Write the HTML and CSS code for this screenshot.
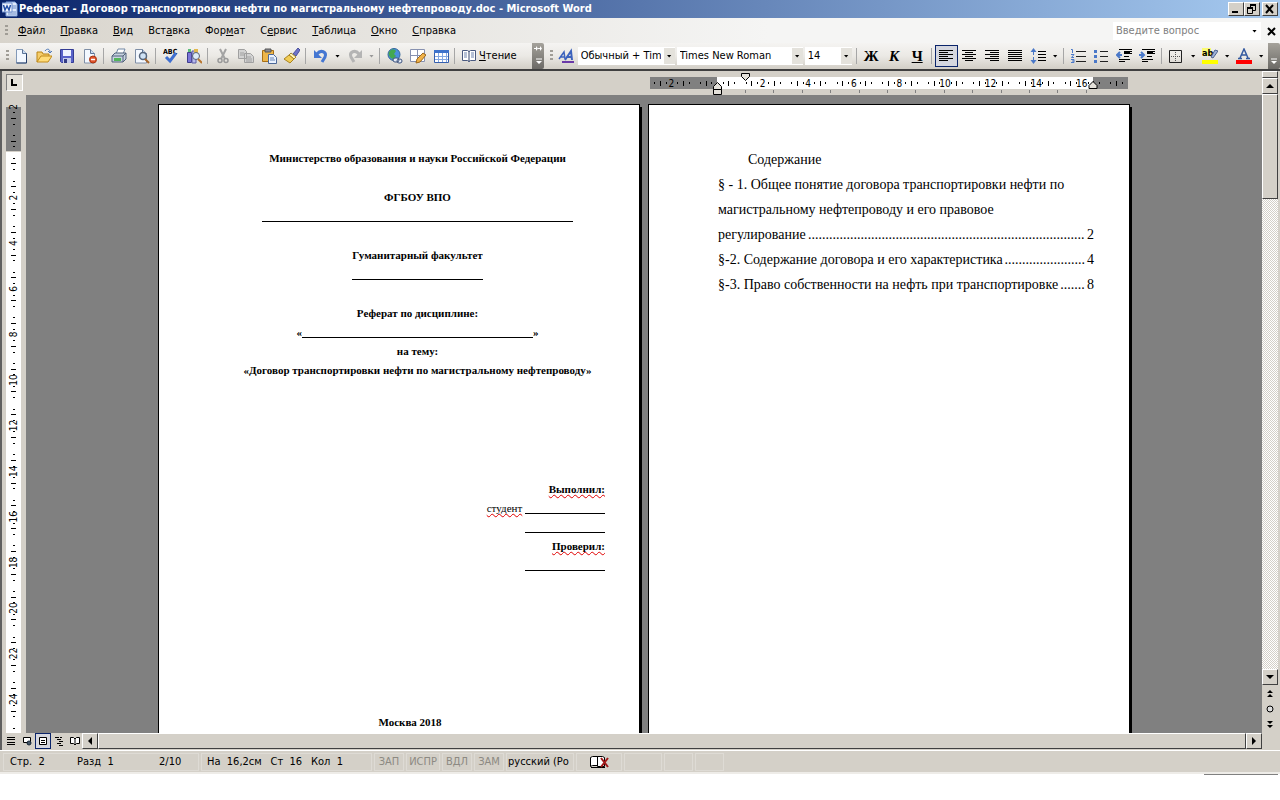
FILE: index.html
```html
<!DOCTYPE html>
<html lang="ru">
<head>
<meta charset="utf-8">
<title>Реферат - Договор транспортировки нефти по магистральному нефтепроводу.doc - Microsoft Word</title>
<link rel="stylesheet" href="styles.css">
</head>
<body>
<div class="app">
  <header class="titlebar">
    <svg class="icon" viewBox="0 0 16 16"><path d="M4 1h9l2 2v12H4z" fill="#dfe9fa" stroke="#7d9fd8"/><path d="M10 5h4M10 7h4M6 11h8M6 13h8" stroke="#6a8cc8"/><path d="M0 2h10v9H0z" fill="#f4f8ff" stroke="#6f8fcc"/><path d="M1.500 4l1.500 5 2-4 2 4 1.500-5" fill="none" stroke="#2450a8" stroke-width="1.500"/></svg>
    <h1>Реферат - Договор транспортировки нефти по магистральному нефтепроводу.doc - Microsoft Word</h1>
    <div class="winbtns">
      <button aria-label="Свернуть"><svg viewBox="0 0 12 10"><path d="M2 8h6" stroke="#000" stroke-width="2"/></svg></button>
      <button aria-label="Восстановить"><svg viewBox="0 0 12 10"><path d="M4 1h6M1 4h6" stroke="#000" stroke-width="2"/><path d="M4.500 2v1M9.500 2v4.500H7M1.500 5v4.500h5V5" fill="none" stroke="#000"/></svg></button>
      <button class="close" aria-label="Закрыть"><svg viewBox="0 0 12 10"><path d="M2 1l7 8M9 1l-7 8" stroke="#000" stroke-width="2"/></svg></button>
    </div>
  </header>

  <nav class="menubar">
    <span class="grip"></span>
    <button><u>Ф</u>айл</button><button><u>П</u>равка</button><button><u>В</u>ид</button><button>Вст<u>а</u>вка</button><button>Фор<u>м</u>ат</button><button>С<u>е</u>рвис</button><button><u>Т</u>аблица</button><button><u>О</u>кно</button><button><u>С</u>правка</button>
    <div class="ask"><input type="text" placeholder="Введите вопрос" aria-label="Введите вопрос"><span class="caret"></span></div>
    <button class="doc-close" aria-label="Закрыть окно"><svg viewBox="0 0 9 9"><path d="M1 1l7 7M8 1L1 8" stroke="#000" stroke-width="2"/></svg></button>
  </nav>

  <div class="toolbars">
    <div class="toolbar standard">
      <span class="grip"></span>
      <button class="tb" aria-label="Создать"><svg viewBox="0 0 16 16"><path d="M3.500 1.500h6l4 4v9.500h-10z" fill="#f3f8ff" stroke="#8299b8"/><path d="M13.500 5v10h-10" fill="none" stroke="#27406b"/><path d="M9.500 1.500v4h4" fill="#cbdcf2" stroke="#5c7496"/></svg></button>
      <button class="tb" aria-label="Открыть"><svg viewBox="0 0 16 16"><path d="M1 14V4h5l1 2h6v3" fill="#f5cd6a" stroke="#b98315"/><path d="M1 14l4-6h11l-4 6z" fill="#ffdc78" stroke="#c08a1a"/><path d="M9 3c2-3 5-2 5 1M12 3l2 2 2-2" fill="none" stroke="#4d78b8"/></svg></button>
      <button class="tb" aria-label="Сохранить"><svg viewBox="0 0 16 16"><path d="M1.500 1.500h13v13h-12l-1-1z" fill="#5862c8" stroke="#343c94"/><path d="M4 2h8v6H4z" fill="#eef2ff"/><path d="M4 10h8v5H4z" fill="#c6ccea"/><path d="M5 11h3v4H5z" fill="#343c84"/></svg></button>
      <button class="tb" aria-label="Разрешения"><svg viewBox="0 0 16 16"><path d="M2.500 1.500h6l4 4v9.500h-10z" fill="#f3f8ff" stroke="#7e8ea6"/><path d="M8.500 1.500v4h4" fill="#cbdcf2" stroke="#5c7496"/><circle cx="11" cy="11.500" r="3.500" fill="#e0532c" stroke="#a8320f"/><path d="M9 11.500h4" stroke="#fff" stroke-width="1.500"/></svg></button>
      <span class="sep"></span>
      <button class="tb" aria-label="Печать"><svg viewBox="0 0 16 16"><path d="M5 6l2-5h7l-2 5" fill="#fff" stroke="#7087a5"/><path d="M1 8l3-3h11v6l-3 3H1z" fill="#c7d2df" stroke="#50617a"/><path d="M1 8h11v6M12 8l3-3" fill="none" stroke="#50617a"/><path d="M3 10h7v3H3z" fill="#53b65a"/></svg></button>
      <button class="tb" aria-label="Предварительный просмотр"><svg viewBox="0 0 16 16"><path d="M1.500 1.500h7l4 4v9.500h-11z" fill="#f3f8ff" stroke="#7e8ea6"/><path d="M8.500 1.500v4h4" fill="#cbdcf2" stroke="#5c7496"/><circle cx="9" cy="8" r="3.500" fill="#cfe2f5" stroke="#55657c" stroke-width="1.500"/><path d="M11 11l4 4" stroke="#a5652c" stroke-width="2"/></svg></button>
      <span class="sep"></span>
      <button class="tb" aria-label="Правописание"><svg viewBox="0 0 16 16"><text x="0" y="6" class="abc">ABC</text><path d="M3 9l4 4 6-8" fill="none" stroke="#3f6fd0" stroke-width="3"/></svg></button>
      <button class="tb" aria-label="Справочные материалы"><svg viewBox="0 0 16 16"><path d="M1.500 4.500h4v10h-4z" fill="#7b76d8" stroke="#3f3d8c"/><path d="M2 1h3v3H2z" fill="#5cbf7b"/><path d="M6 3h4v12H6z" fill="#b7b9ea" stroke="#5c5ca6"/><path d="M8 1h4v4H8z" fill="#e2b84c"/><circle cx="10" cy="8" r="3.500" fill="#dcebf8" stroke="#56617a"/><path d="M12 11l4 4" stroke="#b8762f" stroke-width="2"/></svg></button>
      <span class="sep"></span>
      <button class="tb" aria-label="Вырезать"><svg viewBox="0 0 16 16"><path d="M5 1l5 10M11 1L6 11" stroke="#a3a3a3" stroke-width="2"/><circle cx="5" cy="12.500" r="2" fill="none" stroke="#999" stroke-width="1.500"/><circle cx="11" cy="12.500" r="2" fill="none" stroke="#999" stroke-width="1.500"/></svg></button>
      <button class="tb" aria-label="Копировать"><svg viewBox="0 0 16 16"><path d="M.5 1.500h6l2 2v7h-8zM6.500 5.500h6l3 3v6h-9z" fill="#d3d3d3" stroke="#a0a0a0"/><path d="M2 5h4M2 7h4M8 9h5M8 11h6M8 13h6" stroke="#a0a0a0"/></svg></button>
      <button class="tb" aria-label="Вставить"><svg viewBox="0 0 16 16"><path d="M1.500 2.500h11v11h-11z" fill="#eeb64a" stroke="#a86f14"/><path d="M4 1h6v3H4z" fill="#8c8c94" stroke="#555"/><path d="M7.500 6.500h5l3 3v6h-8z" fill="#eaf2ff" stroke="#4c6897"/><path d="M9 10h4M9 12h5" stroke="#6583b4"/></svg></button>
      <button class="tb" aria-label="Формат по образцу"><svg viewBox="0 0 16 16"><path d="M9 6l5-6 2 2-4 6z" fill="#6e74c9" stroke="#4a4f9c"/><path d="M7 5l5 4-2 2-5-4z" fill="#fff4b5" stroke="#a08532"/><path d="M5 7l5 4-4 4-6-4z" fill="#f1cc55" stroke="#a98320"/></svg></button>
      <span class="sep"></span>
      <button class="tb" aria-label="Отменить"><svg viewBox="0 0 16 16"><path d="M4 6c4-5 10-2 8 3l-3 5" fill="none" stroke="#4577d2" stroke-width="3"/><path d="M1 2v8h8z" fill="#4577d2"/></svg></button>
      <button class="drop" aria-label="Список отмены"><span class="caret"></span></button>
      <button class="tb" aria-label="Вернуть"><svg viewBox="0 0 16 16"><path d="M12 6C8 1 2 4 4 9l3 5" fill="none" stroke="#b4b4b4" stroke-width="3"/><path d="M15 2v8H7z" fill="#b4b4b4"/></svg></button>
      <button class="drop" aria-label="Список возврата"><span class="caret dim"></span></button>
      <span class="sep"></span>
      <button class="tb" aria-label="Гиперссылка"><svg viewBox="0 0 16 16"><circle cx="7" cy="6.500" r="6" fill="#4b8fdc" stroke="#33669a"/><path d="M2 4c3-4 5-3 7-1l-2 3 2 2-3 3C3 10 1 7 2 4z" fill="#44a851"/><path d="M6 12a2 2 0 012-2h2a2 2 0 010 4H8a2 2 0 01-2-2zM10 13a2 2 0 012-2h1a2 2 0 010 4h-1a2 2 0 01-2-2z" fill="#e6edf8" stroke="#3c527d"/></svg></button>
      <button class="tb" aria-label="Таблицы и границы"><svg viewBox="0 0 16 16"><path d="M.5 1.500h14v12H.5zM7.500 1v13M0 7.500h15" fill="#fff" stroke="#8791b0"/><path d="M6 15l1-4 6-6 3 2-6 7z" fill="#f0b24a" stroke="#9d681a"/></svg></button>
      <button class="tb" aria-label="Добавить таблицу"><svg viewBox="0 0 16 16"><path d="M1.500 2.500h14v12h-14z" fill="#fff" stroke="#345fae"/><path d="M1 2h15v3H1z" fill="#3d72cb"/><path d="M5.500 5v9M9.500 5v9M13.500 5v9M2 8.500h13M2 11.500h13" stroke="#83a7e2"/></svg></button>
      <span class="sep"></span>
      <button class="reading"><svg viewBox="0 0 16 16"><path d="M1.500 2.500h5l1.500 1 1.500-1h5v10h-5L8 13.500l-1.500-1h-5z" fill="#fff" stroke="#4a5a80"/><path d="M8 3v11" stroke="#34446c"/><path d="M3 5h3M3 7h3M3 9h3M10 5h3M10 7h3M10 9h3" stroke="#6f83ad"/></svg><span><u>Ч</u>тение</span></button>
      <button class="more" aria-label="Параметры панели"><svg viewBox="0 0 12 26"><path d="M2 5.500h2M6 5.500h2M4 16h6" stroke="#fff"/><path d="M4 3l2 2.500L4 8zM8 3l2 2.500L8 8zM4 18h6l-3 3z" fill="#fff"/></svg></button>
    </div>
    <div class="toolbar formatting">
      <span class="grip"></span>
      <button class="tb" aria-label="Стили и форматирование"><svg viewBox="0 0 16 16"><path d="M1 11L6 4l1 7M3 9h4" fill="none" stroke="#3b62bd" stroke-width="1.500"/><path d="M7 12l6-9 1 9M9 9h5" fill="none" stroke="#3b62bd" stroke-width="2"/><path d="M4 14h12" stroke="#6a3aa8" stroke-width="2"/></svg></button>
      <span class="combo style"><select aria-label="Стиль"><option>Обычный + Times New Roman</option></select><span class="arrow"><span class="caret"></span></span></span>
      <span class="combo font"><select aria-label="Шрифт"><option>Times New Roman</option></select><span class="arrow"><span class="caret"></span></span></span>
      <span class="combo size"><select aria-label="Размер"><option>14</option></select><span class="arrow"><span class="caret"></span></span></span>
      <span class="sep"></span>
      <button class="tb letter">Ж</button>
      <button class="tb letter"><i>К</i></button>
      <button class="tb letter"><u>Ч</u></button>
      <span class="sep"></span>
      <button class="tb active" aria-label="По левому краю"><svg viewBox="0 0 16 16"><path d="M1 2.500h14M1 4.500h9M1 6.500h14M1 8.500h9M1 10.500h14M1 12.500h9" stroke="#000"/></svg></button>
      <button class="tb" aria-label="По центру"><svg viewBox="0 0 16 16"><path d="M1 2.500h14M4 4.500h8M1 6.500h14M4 8.500h8M1 10.500h14M4 12.500h8" stroke="#000"/></svg></button>
      <button class="tb" aria-label="По правому краю"><svg viewBox="0 0 16 16"><path d="M1 2.500h14M6 4.500h9M1 6.500h14M6 8.500h9M1 10.500h14M6 12.500h9" stroke="#000"/></svg></button>
      <button class="tb" aria-label="По ширине"><svg viewBox="0 0 16 16"><path d="M1 2.500h14M1 4.500h14M1 6.500h14M1 8.500h14M1 10.500h14M1 12.500h14" stroke="#000"/></svg></button>
      <button class="tb" aria-label="Междустрочный интервал"><svg viewBox="0 0 16 16"><path d="M3.500 2v5M3.500 9v5" stroke="#4a78c8"/><path d="M.5 4l3-4 3 4zM.5 12l3 4 3-4z" fill="#4a78c8"/><path d="M8 3.500h8M8 6.500h8M8 9.500h8M8 12.500h8" stroke="#000"/></svg></button>
      <button class="drop" aria-label="Выбор интервала"><span class="caret"></span></button>
      <span class="sep"></span>
      <button class="tb" aria-label="Нумерация"><svg viewBox="0 0 16 16"><path d="M1 1.500h1.500V5M1 6.500h3L1.500 9.500H4M1 11.500h3v3H1M2 13h2" fill="none" stroke="#4a78c8"/><path d="M6 3.500h10M6 8.500h10M6 13.500h10" stroke="#222"/></svg></button>
      <button class="tb" aria-label="Маркеры"><svg viewBox="0 0 16 16"><path d="M1 2h3v3H1zM1 7h3v3H1zM1 12h3v3H1z" fill="#4a78c8"/><path d="M7 3.500h8M7 8.500h8M7 13.500h8" stroke="#222"/></svg></button>
      <button class="tb" aria-label="Уменьшить отступ"><svg viewBox="0 0 16 16"><path d="M3 1.500h13M8 3.500h8M8 5.500h8M8 8.500h5M3 11.500h11M3 13.500h6" stroke="#000"/><path d="M8 4h6" stroke="#000" stroke-width="2"/><path d="M6 7H2M4 4L1 7l3 3" fill="none" stroke="#4a78c8" stroke-width="2"/></svg></button>
      <button class="tb" aria-label="Увеличить отступ"><svg viewBox="0 0 16 16"><path d="M3 1.500h13M8 3.500h8M8 5.500h8M8 8.500h5M3 11.500h11M3 13.500h6" stroke="#000"/><path d="M8 4h6" stroke="#000" stroke-width="2"/><path d="M0 7h4M2 4l3 3-3 3" fill="none" stroke="#4a78c8" stroke-width="2"/></svg></button>
      <span class="sep"></span>
      <button class="tb" aria-label="Границы"><svg viewBox="0 0 16 16"><path d="M1.500 2.500h12v12h-12z" fill="none" stroke="#222"/><path d="M7.500 4v10M3 8.500h10" stroke="#555" stroke-dasharray="1 1"/></svg></button>
      <button class="drop" aria-label="Выбор границы"><span class="caret"></span></button>
      <button class="tb" aria-label="Выделение цветом"><svg viewBox="0 0 16 16"><path d="M0 0h9v8H0z" fill="#fbfb73"/><text x="0" y="8" class="ab">ab</text><path d="M9 9l4-7 3 1-5 7z" fill="#9fb2d8" stroke="#4d628f"/><path d="M0 12h16v4H0z" fill="#ff0"/></svg></button>
      <button class="drop" aria-label="Цвет выделения"><span class="caret"></span></button>
      <button class="tb" aria-label="Цвет шрифта"><svg viewBox="0 0 16 16"><path d="M4 10L8 1l4 9M5 7h6M2 10.500h4M10 10.500h4" fill="none" stroke="#34599f" stroke-width="1.500"/><path d="M0 12h16v4H0z" fill="#f00"/></svg></button>
      <button class="drop" aria-label="Выбор цвета шрифта"><span class="caret"></span></button>
      <button class="more end" aria-label="Параметры панели форматирования"><svg viewBox="0 0 12 26"><path d="M3 16h6" stroke="#fff"/><path d="M3 18h6l-3 3z" fill="#fff"/></svg></button>
    </div>
  </div>

  <main class="work">
    <div class="left-col">
      <button class="tabstop" aria-label="Табуляция"><svg viewBox="0 0 9 9"><path d="M2 1v6h5" fill="none" stroke="#000" stroke-width="2"/></svg></button>
      <div class="vruler">
        <svg width="15" height="7000" viewBox="0 0 150 70000">
          <rect y="30" width="150" height="440" fill="#808080"/>
          <rect y="480" width="150" height="69520" fill="#fff"/>
          <g shape-rendering="crispEdges" stroke="#000">
            <path d="M75 138V6270" stroke-width="50" stroke-dasharray="10 218"/>
            <path d="M75 81V6270" stroke-width="20" stroke-dasharray="10 104"/>
          </g>
          <g class="marks">
            <text transform="translate(110 30) rotate(-90)">2</text>
            <text transform="translate(110 936) rotate(-90)">2</text>
            <text transform="translate(110 1392) rotate(-90)">4</text>
            <text transform="translate(110 1848) rotate(-90)">6</text>
            <text transform="translate(110 2304) rotate(-90)">8</text>
            <text transform="translate(110 2760) rotate(-90)">10</text>
            <text transform="translate(110 3216) rotate(-90)">12</text>
            <text transform="translate(110 3672) rotate(-90)">14</text>
            <text transform="translate(110 4128) rotate(-90)">16</text>
            <text transform="translate(110 4584) rotate(-90)">18</text>
            <text transform="translate(110 5040) rotate(-90)">20</text>
            <text transform="translate(110 5496) rotate(-90)">22</text>
            <text transform="translate(110 5952) rotate(-90)">24</text>
          </g>
        </svg>
      </div>
    </div>

    <div class="center-col">
      <div class="hruler">
        <span class="sheet-space"></span>
        <span class="sheet-space">
        <svg width="482" height="24" viewBox="0 0 4820 240">
          <rect x="20" y="60" width="4780" height="120" fill="#808080"/>
          <rect x="690" y="60" width="3760" height="120" fill="#fff"/>
          <g shape-rendering="crispEdges" stroke="#000">
            <path d="M120 120H4700" stroke-width="50" stroke-dasharray="10 218"/>
            <path d="M63 120H4750" stroke-width="20" stroke-dasharray="10 104"/>
            <path d="M970 205H4600" stroke-width="30" stroke-dasharray="10 274" stroke="#808080"/>
          </g>
          <g class="marks">
            <text x="234" y="155">2</text><text x="1146" y="155">2</text><text x="1602" y="155">4</text><text x="2058" y="155">6</text><text x="2514" y="155">8</text><text x="2970" y="155">10</text><text x="3426" y="155">12</text><text x="3882" y="155">14</text><text x="4338" y="155">16</text>
          </g>
          <g fill="#e4e1da" stroke="#000" stroke-width="10"><path d="M935 25h80v30l-40 40-40-40z"/><path d="M655 185v-30l40-40 40 40v30zM655 185h80v50h-80z"/><path d="M4410 175v-30l40-40 40 40v30z"/></g>
        </svg>
        </span>
      </div>
      <div class="canvas">
        <article class="page cover">
          <section class="heading"><p>Министерство образования и науки Российской Федерации</p></section>
          <section class="heading"><p>ФГБОУ ВПО</p><p><span class="blank w-full"></span></p></section>
          <section class="heading"><p>Гуманитарный факультет</p><p><span class="blank w-mid"></span></p></section>
          <section class="heading"><p>Реферат по дисциплине:</p><p>«<span class="blank w-topic"></span>»</p><p>на тему:</p><p>«Договор транспортировки нефти по магистральному нефтепроводу»</p></section>
          <section class="sign"><p><b class="typo">Выполнил:</b></p><p><span class="typo">студент</span> <span class="blank w-sign"></span></p><p><span class="blank w-sign"></span></p><p><b class="typo">Проверил:</b></p><p><span class="blank w-sign"></span></p></section>
          <p class="city">Москва 2018</p>
        </article>
        <article class="page toc">
          <h2>Содержание</h2>
          <p>§ - 1. Общее понятие договора транспортировки нефти по</p>
          <p>магистральному нефтепроводу и его правовое</p>
          <p class="entry"><span>регулирование</span><span>...............................................................................</span><span>2</span></p>
          <p class="entry"><span>§-2. Содержание договора и его характеристика</span><span>.......................</span><span>4</span></p>
          <p class="entry"><span>§-3. Право собственности на нефть при транспортировке</span><span>.......</span><span>8</span></p>
        </article>
      </div>
    </div>

    <div class="vscroll">
      <span class="split"></span>
      <button aria-label="Вверх"><svg viewBox="0 0 8 8"><path d="M0 6h8L4 2z"/></svg></button>
      <span class="thumb"></span>
      <span class="track"></span>
      <button aria-label="Вниз"><svg viewBox="0 0 8 8"><path d="M0 2h8L4 6z"/></svg></button>
      <button class="flat" aria-label="Предыдущая страница"><svg viewBox="0 0 8 8"><path d="M1 4h6L4 1zM1 8h6L4 5z"/></svg></button>
      <button class="flat" aria-label="Выбор объекта перехода"><svg viewBox="0 0 8 8"><circle cx="4" cy="4" r="3" fill="#ddd" stroke="#000"/></svg></button>
      <button class="flat" aria-label="Следующая страница"><svg viewBox="0 0 8 8"><path d="M1 0h6L4 3zM1 4h6L4 7z"/></svg></button>
    </div>
  </main>

  <div class="bottom">
    <div class="views">
      <button aria-label="Обычный режим"><svg viewBox="0 0 10 10"><path d="M1 1.500h8M1 3.500h8M1 6.500h8M1 8.500h8" stroke="#000"/></svg></button>
      <button aria-label="Веб-документ"><svg viewBox="0 0 10 10"><path d="M1.500 1.500h7v5h-7z" fill="#fff" stroke="#000"/><circle cx="7" cy="7" r="2" fill="#456" stroke="#123"/></svg></button>
      <button class="on" aria-label="Разметка страницы"><svg viewBox="0 0 10 10"><path d="M1.500 1.500h7v7h-7z" fill="#fff" stroke="#000"/><path d="M3 4.500h4M3 6.500h4" stroke="#000"/></svg></button>
      <button aria-label="Структура"><svg viewBox="0 0 10 10"><path d="M1 1.500h4M6 1.500h2M3 3.500h4M5 5.500h4M3 7.500h4M5 9.500h4" stroke="#000"/></svg></button>
      <button aria-label="Режим чтения"><svg viewBox="0 0 10 10"><path d="M.5 1.500h3L5 3l1.500-1.500h3v6h-3L5 9 3.500 7.500h-3zM5 3v6" fill="#fff" stroke="#000"/></svg></button>
    </div>
    <button class="sb" aria-label="Влево"><svg viewBox="0 0 8 8"><path d="M6 0v8L2 4z"/></svg></button>
    <span class="hthumb"></span>
    <button class="sb" aria-label="Вправо"><svg viewBox="0 0 8 8"><path d="M2 0v8l4-4z"/></svg></button>
  </div>

  <footer class="status">
    <div class="cell c-page"><span>Стр.&nbsp; 2</span><span>Разд&nbsp; 1</span><span>2/10</span></div>
    <div class="cell c-pos"><span>На&nbsp; 16,2см</span><span>Ст&nbsp; 16</span><span>Кол&nbsp; 1</span></div>
    <div class="cell mode">ЗАП</div><div class="cell mode wide">ИСПР</div><div class="cell mode">ВДЛ</div><div class="cell mode">ЗАМ</div>
    <div class="cell lang">русский (Ро</div>
    <div class="cell book"><svg viewBox="0 0 20 14"><path d="M1.500 2.500l2-1h5v9h-5l-2 1zM8.500 1.500h5l2 1v9h-7z" fill="#fff" stroke="#000"/><path d="M2 12.500h14" stroke="#000"/><path d="M12 3l7 9M19 3l-7 9" stroke="#a01818" stroke-width="2"/></svg></div>
    <div class="cell e1"></div><div class="cell e2"></div><div class="cell e2"></div>
  </footer>
</div>
<div class="below"></div>
</body>
</html>
```
FILE: styles.css
```css
* { box-sizing: border-box; }
body { margin: 0; height: 100vh; display: flex; flex-direction: column; background: #fff; overflow: hidden; font: 11px/14px "DejaVu Sans Condensed", "DejaVu Sans", sans-serif; color: #000; }
p, h1, h2 { margin: 0; font: inherit; }
button { margin: 0; padding: 0; border: 0; background: none; font: inherit; color: inherit; display: flex; align-items: center; justify-content: center; flex: none; }
svg { display: block; flex: none; }

.app { flex: 1; min-height: 0; display: flex; flex-direction: column; background: #d4d0c8; }
.below { flex: none; width: 74px; height: 26px; margin-left: auto; margin-right: 2px; border-top: 1px solid #808080; }

.titlebar { flex: none; height: 18px; display: flex; align-items: center; gap: 1px; padding: 0 2px; background: linear-gradient(90deg, #0a246a, #a6caf0); color: #fff; }
.titlebar .icon { width: 16px; height: 16px; }
.titlebar h1 { flex: 1; font-weight: bold; white-space: nowrap; }
.winbtns { display: flex; }
.winbtns button { width: 16px; height: 14px; background: #d4d0c8; border: 1px solid; border-color: #fff #404040 #404040 #fff; }
.winbtns .close { margin-left: 2px; }
.winbtns svg { width: 12px; height: 10px; }

.menubar { flex: none; height: 25px; display: flex; align-items: center; padding: 1px 0 0 3px; background: linear-gradient(90deg, #d8d4cc, #f5f5f4 60%); }
.menubar button { height: 20px; padding: 0 7px 0 8px; }
.grip { flex: none; width: 3px; height: 12px; margin: 0 2px; background: repeating-linear-gradient(#a09d96 0 2px, transparent 2px 4px); }
.ask { margin-left: auto; width: 148px; height: 18px; display: flex; align-items: center; background: #fff; }
.ask input { flex: 1; min-width: 0; border: 0; padding: 0 3px; background: none; font: inherit; }
.ask input::placeholder { color: #808080; opacity: 1; }
.ask .caret { margin-right: 4px; }
.menubar .doc-close { padding: 0; width: 17px; margin-left: 2px; }
.doc-close svg { width: 9px; height: 9px; }
.caret { display: block; width: 5px; height: 3px; background: #000; clip-path: polygon(0 0, 100% 0, 50% 100%); }
.caret.dim { background: #999; }

.toolbars { flex: none; height: 28px; display: flex; border-bottom: 2px solid #404040; background: #e4e2dd; }
.toolbar { display: flex; align-items: center; background: linear-gradient(#f5f4f2, #ebe9e5 50%, #d2cec6); }
.standard { padding-left: 4px; }
.standard .grip { margin-right: 0; }
.formatting { flex: 1; padding-left: 4px; }
.tb { width: 23px; height: 22px; }
.tb svg { width: 16px; height: 16px; }
.tb.active { background: #d5d7df; border: 1px solid #0a246a; }
.letter { font: bold 15px/20px "Liberation Serif", serif; }
.drop { width: 11px; height: 22px; }
.sep { flex: none; width: 1px; height: 16px; margin: 0 3px 0 2px; background: #a6a6a6; }
.reading { height: 22px; padding: 0 3px; gap: 2px; }
.reading svg { width: 16px; height: 16px; }
.more { width: 12px; height: 26px; margin-left: 12px; background: linear-gradient(#a5a29b, #6c6a66); border-radius: 0 2px 2px 0; }
.more svg { width: 12px; height: 26px; }
.more.end { margin-left: auto; }
.combo { position: relative; flex: none; height: 18px; margin-right: 2px; background: #fff; }
.combo select { width: 100%; height: 18px; padding: 0 14px 0 3px; border: 0; background: #fff; appearance: none; font: inherit; color: #000; }
.combo .arrow { position: absolute; top: 1px; right: 0; width: 11px; height: 16px; display: flex; align-items: center; justify-content: center; background: #e4e2dc; pointer-events: none; }
.style { width: 97px; }
.font { width: 126px; }
.size { width: 47px; }

.work { flex: 1; min-height: 0; display: flex; border-left: 2px solid #606060; }
.left-col { flex: none; width: 24px; padding: 3px 0 0 4px; display: flex; flex-direction: column; overflow: hidden; }
.tabstop { width: 17px; height: 17px; background: #e4e1da; border: 1px solid; border-color: #808080 #fff #fff #808080; }
.tabstop svg { width: 9px; height: 9px; }
.vruler { flex: 1; min-height: 0; margin-top: 6px; padding-top: 7px; overflow: hidden; }
.vruler svg { overflow: visible; }
.marks { font-size: 100px; text-anchor: middle; }
.center-col { flex: 1; min-width: 0; display: flex; flex-direction: column; }
.hruler { flex: none; height: 24px; display: flex; justify-content: center; gap: 8px; }
.sheet-space { flex: none; width: 482px; }
.canvas { flex: 1; min-height: 0; overflow: hidden; display: flex; justify-content: center; align-items: flex-start; gap: 8px; padding-top: 9px; background: #808080; }
.page { flex: none; width: 482px; min-height: 682px; background: #fff; border: 1px solid #000; box-shadow: 2px 3px 0 #000; font-family: "Liberation Serif", "Times New Roman", serif; }
.cover { padding: 44px 34px 0 71px; font-size: 11px; line-height: 19px; display: flex; flex-direction: column; gap: 20px; }
.heading { text-align: center; font-weight: bold; }
.heading p { white-space: nowrap; }
.blank { display: inline-block; height: 10px; border-bottom: 1px solid #000; vertical-align: -2px; }
.w-full { width: 311px; }
.w-mid { width: 131px; }
.w-topic { width: 231px; }
.w-sign { width: 80px; }
.sign { margin-top: 80px; text-align: right; }
.typo { text-decoration: underline wavy #e00000 1px; text-underline-offset: 1px; text-decoration-skip-ink: none; }
.city { margin-top: 118px; padding-right: 15px; text-align: center; font-weight: bold; }
.toc { padding: 42px 35px 0 69px; font-size: 14px; line-height: 25px; }
.toc h2 { padding-left: 30px; }
.toc p { white-space: nowrap; }
.entry { display: flex; justify-content: space-between; }

.vscroll { flex: none; width: 18px; padding-right: 2px; display: flex; flex-direction: column; }
.vscroll button, .sb { width: 16px; height: 16px; background: #d4d0c8; border: 1px solid; border-color: #fff #404040 #404040 #fff; }
.vscroll svg, .sb svg { width: 8px; height: 8px; }
.vscroll .flat { border-color: transparent; }
.split { flex: none; height: 7px; border: 1px solid; border-color: #fff #404040 #404040 #fff; }
.thumb { flex: none; height: 105px; border: 1px solid; border-color: #fff #404040 #404040 #fff; }
.track { flex: 1; background: repeating-conic-gradient(#d4d0c8 0 25%, #fff 0 50%) 0 0 / 2px 2px; }

.bottom { flex: none; height: 17px; display: flex; align-items: stretch; padding: 0 18px 0 1px; border-left: 2px solid #606060; }
.views { display: flex; width: 79px; }
.views button { width: 16px; height: 16px; }
.views .on { background: #d5d7df; border: 1px solid #0a246a; }
.views svg { width: 10px; height: 10px; }
.hthumb { flex: 1; height: 16px; border: 1px solid; border-color: #fff #404040 #404040 #fff; }

.status { flex: none; height: 24px; display: flex; align-items: center; gap: 2px; padding: 0 3px; border-top: 1px solid #fff; border-bottom: 2px solid #eeece8; }
.cell { flex: none; height: 18px; display: flex; align-items: center; border: 1px solid #dedbd5; white-space: nowrap; }
.c-page { width: 196px; padding: 0 6px; display: grid; grid-template-columns: 67px 82px auto; }
.c-pos { width: 171px; padding: 0 28px 0 5px; justify-content: space-between; }
.mode { width: 30px; justify-content: center; color: #8c8982; }
.mode.wide { width: 34px; }
.lang { width: 68px; padding-left: 1px; overflow: hidden; }
.book { width: 46px; justify-content: center; }
.book svg { width: 20px; height: 14px; }
.e1 { width: 38px; }
.e2 { width: 29px; }
.abc { font: bold 7px "DejaVu Sans Condensed", sans-serif; }
.ab { font: bold 9px "DejaVu Sans Condensed", sans-serif; }
```
